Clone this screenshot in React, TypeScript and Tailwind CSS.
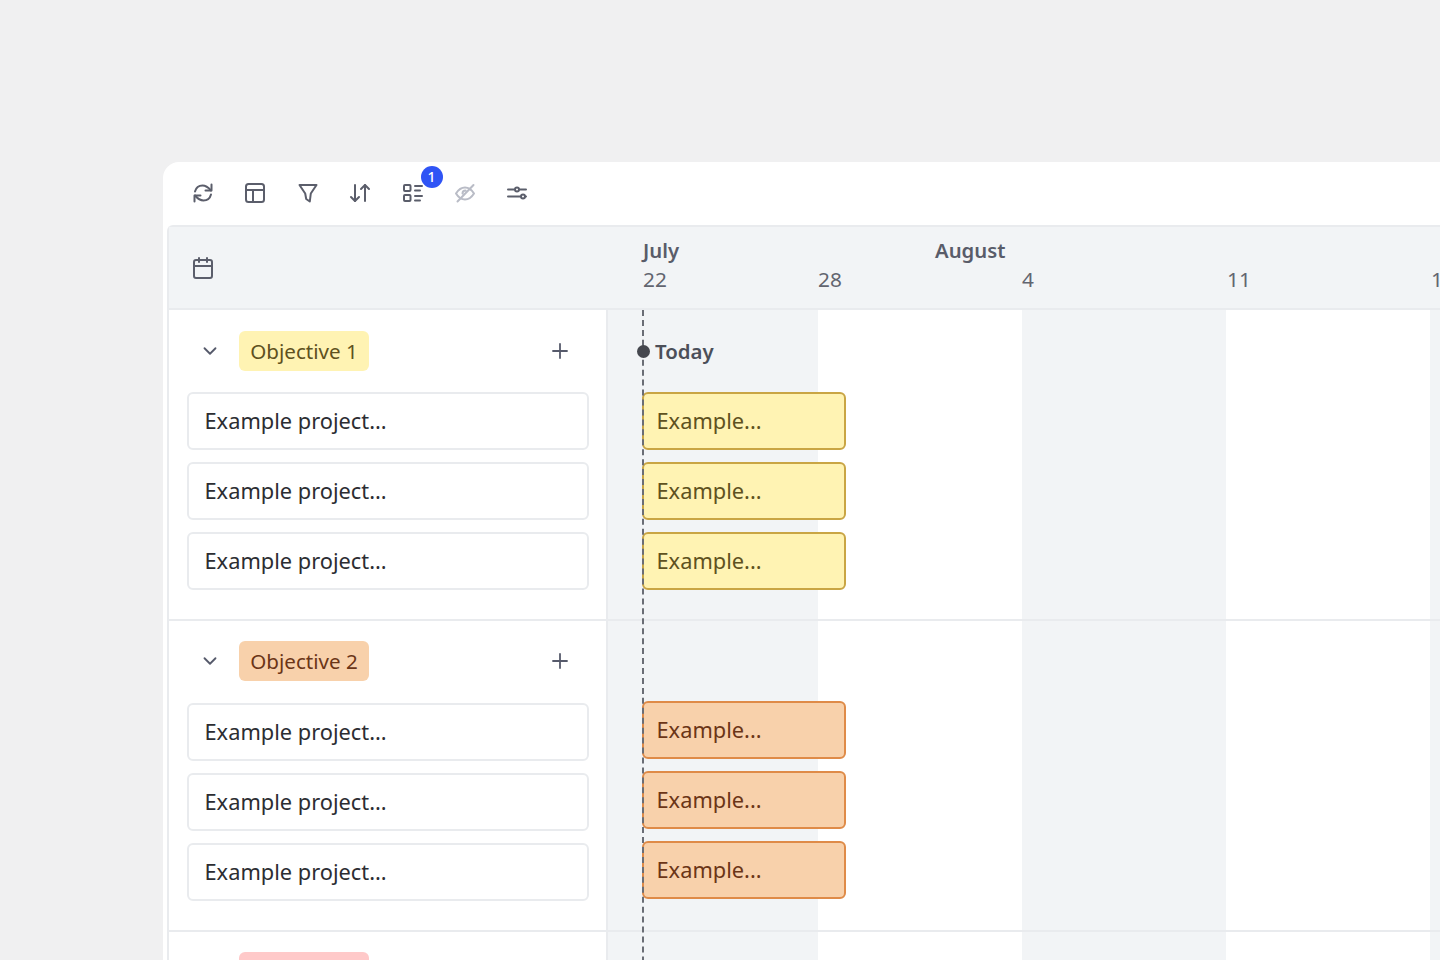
import { ArrowDownUp, Calendar, ChevronDown, Plus } from "lucide-react";

const groups = [
  {
    name: "Objective 1",
    chip: "bg-[#fff3b3] text-[#5e5120]",
    bar: "bg-[#fff3b3] border-[#c9a544] text-[#5e5120]",
    rowTop: "pt-[21px]",
    cardTop: "mt-[21px]",
    barTop: "mt-[21px]",
    rowBottom: "pb-[29px]",
    today: true,
  },
  {
    name: "Objective 2",
    chip: "bg-[#f8d1ab] text-[#6b3517]",
    bar: "bg-[#f8d1ab] border-[#df8b48] text-[#6b3517]",
    rowTop: "pt-[20px]",
    cardTop: "mt-[22px]",
    barTop: "mt-[20px]",
    rowBottom: "pb-[29px]",
    today: false,
  },
];

function RefreshIcon() {
  return (
    <svg width="24" height="24" viewBox="0 0 24 24" fill="none" stroke="currentColor" strokeWidth="2" strokeLinecap="round" strokeLinejoin="round">
      <path d="M4 10.500C5 6.800 8 4.500 11.500 4.500c3 0 5.500 1.500 8.500 5" />
      <path d="M20.500 3.500V9.500H14.500" />
      <path d="M20 13.500c-1 3.700-4 6-7.500 6-3 0-5.500-1.500-8.500-5" />
      <path d="M3.500 20.500V14.500H9.500" />
    </svg>
  );
}

function LayoutIcon() {
  return (
    <svg width="24" height="24" viewBox="0 0 24 24" fill="none" stroke="currentColor" strokeWidth="2" strokeLinecap="round" strokeLinejoin="round">
      <rect x="3" y="3" width="18" height="18" rx="2.500" />
      <path d="M3 9h18M10 9v12" />
    </svg>
  );
}

function FunnelIcon() {
  return (
    <svg width="24" height="24" viewBox="0 0 24 24" fill="none" stroke="currentColor" strokeWidth="2" strokeLinecap="round" strokeLinejoin="round">
      <path d="M3.500 4h17l-5.700 8.500-1 8-3.600-2.500-1-5.500z" />
    </svg>
  );
}

function ListIcon() {
  return (
    <svg width="24" height="24" viewBox="0 0 24 24" fill="none" stroke="currentColor" strokeWidth="2" strokeLinecap="round" strokeLinejoin="round">
      <rect x="3" y="4" width="6.500" height="6" rx="1" />
      <rect x="3" y="14" width="6.500" height="6" rx="1" />
      <path d="M14 5h7M14 9.500h5M14 15h7M14 19.500h5" />
    </svg>
  );
}

function HiddenIcon() {
  return (
    <svg width="24" height="24" viewBox="0 0 24 24" fill="none" stroke="currentColor" strokeWidth="2" strokeLinecap="round" strokeLinejoin="round">
      <path d="M3 12.500C5.500 8.500 8.500 6.500 12 6.500s6.500 2 9 6c-2.500 4-5.500 6-9 6s-6.500-2-9-6z" />
      <path d="M9.500 12.500a3 3 0 0 1 3-3M4.500 20.500 20.500 4" />
    </svg>
  );
}

function SlidersIcon() {
  return (
    <svg width="24" height="24" viewBox="0 0 24 24" fill="none" stroke="currentColor" strokeWidth="2" strokeLinecap="round">
      <path d="M3 8.500h7M14 8.500h7M3 15.500h13M20 15.500h1" />
      <circle cx="12" cy="8.500" r="2" />
      <circle cx="18" cy="15.500" r="2" />
    </svg>
  );
}

function GroupRow({ group }: { group: (typeof groups)[number] }) {
  return (
    <div className="flex border-b-2 border-[#e9ebee]">
      {/* left column */}
      <div className={`w-[439px] shrink-0 border-r-2 border-[#e9ebee] bg-white pl-[18px] pr-[17px] ${group.rowTop} ${group.rowBottom}`}>
        <div className="flex h-10 items-center">
          <ChevronDown className="ml-[12px] h-[22px] w-[22px] text-[#565a6b]" strokeWidth={2} />
          <div className={`ml-[18px] flex h-10 w-[130px] items-center justify-center rounded-md text-[20.600px] ${group.chip}`}>
            {group.name}
          </div>
          <Plus className="ml-auto mr-[17px] h-[24px] w-[24px] text-[#565a6b]" strokeWidth={1.8} />
        </div>
        <div className={`flex flex-col gap-3 ${group.cardTop}`}>
          {[0, 1, 2].map((i) => (
            <div
              key={i}
              className="flex h-[58px] items-center rounded-md border-2 border-[#e9ebee] bg-white pl-[15.500px] text-[21.800px] text-[#2c2d32]"
            >
              Example project...
            </div>
          ))}
        </div>
      </div>

      {/* bars */}
      <div className={`relative flex-1 pl-[34px] ${group.rowTop}`}>
        <div className="flex h-10 items-center pl-[13px] text-[20.400px] font-semibold text-[#4c4f59]">
          {group.today ? "Today" : ""}
        </div>
        <div className={`flex flex-col gap-3 ${group.barTop}`}>
          {[0, 1, 2].map((i) => (
            <div
              key={i}
              className={`flex h-[58px] w-[204px] items-center rounded-md border-2 pl-[12.500px] text-[21.800px] ${group.bar}`}
            >
              Example...
            </div>
          ))}
        </div>
      </div>
    </div>
  );
}

export default function App() {
  return (
    <div className="h-[960px] w-[1440px] overflow-hidden bg-[#f0f0f1] pl-[163px] pt-[162px] font-['Noto_Sans',sans-serif]">
      <div className="h-[900px] w-[1400px] rounded-tl-2xl bg-white pl-[4px]">
        {/* Toolbar */}
        <div className="flex h-[63px] items-center gap-[28.400px] pb-0.5 pl-[24px] text-[#5b5e6b]">
          <RefreshIcon />
          <LayoutIcon />
          <FunnelIcon />
          <ArrowDownUp className="h-6 w-6" strokeWidth={2} />
          <div className="relative">
            <ListIcon />
            <div className="absolute -right-[18px] -top-[15px] flex h-[22px] w-[22px] items-center justify-center rounded-full bg-[#2f54f5] text-[14px] font-medium text-white">
              1
            </div>
          </div>
          <div className="text-[#b9bcc6]">
            <HiddenIcon />
          </div>
          <SlidersIcon />
        </div>

        {/* Table */}
        <div className="rounded-tl-md border-l-2 border-t-2 border-[#e9ebee]">
          {/* Header */}
          <div className="flex h-[83px] border-b-2 border-[#e9ebee] bg-[#f2f4f6]">
            <div className="flex w-[439px] shrink-0 items-center pl-[22px] text-[#5b5e6b]">
              <Calendar className="h-6 w-6" strokeWidth={2} />
            </div>
            <div className="flex-1 pl-[35px] pt-[9px]">
              <div className="flex h-[29px] items-center text-[20.300px] font-semibold text-[#595c69]">
                <span className="w-[292px]">July</span>
                <span>August</span>
              </div>
              <div className="flex h-[29px] items-center text-[20.800px] text-[#62656f]">
                <span className="w-[175px]">22</span>
                <span className="w-[204px]">28</span>
                <span className="w-[205px]">4</span>
                <span className="w-[204px]">11</span>
                <span>1</span>
              </div>
            </div>
          </div>

          {/* Body */}
          <div className="relative">
            {/* week bands */}
            <div className="absolute inset-y-0 left-[439px] right-0 flex">
              <div className="w-[210px] shrink-0 bg-[#f2f4f6]" />
              <div className="w-[204px] shrink-0" />
              <div className="w-[204px] shrink-0 bg-[#f2f4f6]" />
              <div className="w-[204px] shrink-0" />
              <div className="w-[204px] shrink-0 bg-[#f2f4f6]" />
            </div>

            <div className="relative">
              {groups.map((g) => (
                <GroupRow key={g.name} group={g} />
              ))}
              <div className="flex">
                <div className="w-[439px] shrink-0 border-r-2 border-[#e9ebee] bg-white pb-10 pl-[70px] pt-[20px]">
                  <div className="h-10 w-[130px] rounded-md bg-[#ffc9c9]" />
                </div>
              </div>
            </div>

            {/* today marker */}
            <div className="absolute inset-y-0 left-[473px] border-l-2 border-dashed border-[#6a6d75]" />
            <div className="absolute left-[468px] top-[35px] h-[13px] w-[13px] rounded-full bg-[#45474e]" />
          </div>
        </div>
      </div>
    </div>
  );
}
